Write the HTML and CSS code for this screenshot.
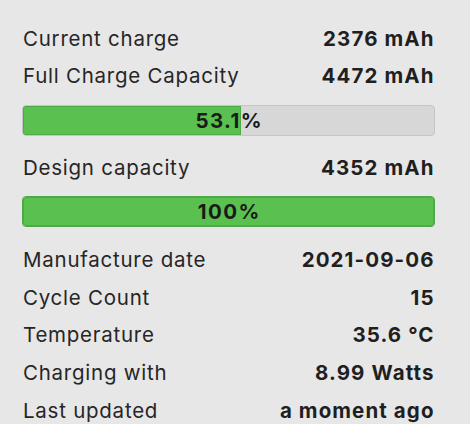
FILE: index.html
```html
<!DOCTYPE html>
<html>
<head>
<meta charset="utf-8">
<link rel="stylesheet" href="styles.css">
</head>
<body>
<div class="panel">
  <div class="row"><span class="label">Current charge</span><span class="value">2376 mAh</span></div>
  <div class="row"><span class="label">Full Charge Capacity</span><span class="value">4472 mAh</span></div>
  <div class="bar bar-first">
    <div class="fill" style="width: 53.1%"></div>
    <span class="bar-text">53.1%</span>
  </div>
  <div class="row"><span class="label">Design capacity</span><span class="value">4352 mAh</span></div>
  <div class="bar bar-second">
    <div class="fill" style="width: 100%"></div>
    <span class="bar-text">100%</span>
  </div>
  <div class="row"><span class="label">Manufacture date</span><span class="value">2021-09-06</span></div>
  <div class="row"><span class="label">Cycle Count</span><span class="value">15</span></div>
  <div class="row"><span class="label">Temperature</span><span class="value">35.6 °C</span></div>
  <div class="row"><span class="label">Charging with</span><span class="value">8.99 Watts</span></div>
  <div class="row"><span class="label">Last updated</span><span class="value">a moment ago</span></div>
</div>
</body>
</html>
```

FILE: styles.css
```css
html, body {
  margin: 0;
  padding: 0;
  background: #e8e7e7;
}

body {
  font-family: Inter, "Noto Sans", "Liberation Sans", sans-serif;
  color: #242424;
  width: 470px;
  height: 424px;
  overflow: hidden;
}

.panel {
  padding: 19.5px 35px 0 22px;
  display: flex;
  flex-direction: column;
}

.row {
  display: flex;
  justify-content: space-between;
  align-items: center;
  height: 37.6px;
  line-height: 37.6px;
  font-size: 20.5px;
  padding: 0 1.5px 0 1px;
}

.label {
  font-weight: 400;
  color: #262626;
  letter-spacing: 0.75px;
}

.value {
  font-weight: 700;
  color: #1f1f1f;
  letter-spacing: 1.1px;
  margin-right: -1.1px;
}

.bar {
  position: relative;
  height: 31px;
  box-sizing: border-box;
  border: 1px solid #c6c5c5;
  border-radius: 4px;
  background: #d8d7d7;
  overflow: hidden;
  display: flex;
  align-items: center;
  justify-content: center;
}

.bar-first {
  margin: 10px 0 13px;
}

.bar-second {
  margin: 10px 0 14px;
}

.fill {
  position: absolute;
  left: 0;
  top: 0;
  bottom: 0;
  background: #5ac150;
  box-shadow: inset 0 0 0 1px #4eaa46;
  border-radius: 3px 0 0 3px;
}

.bar-second .fill {
  border-radius: 3px;
}

.bar-second {
  border-color: #4eaa46;
}

.bar-text {
  position: relative;
  font-size: 20.5px;
  font-weight: 700;
  color: #1a1a1a;
  letter-spacing: 1.4px;
  margin-right: -1.4px;
}
```
